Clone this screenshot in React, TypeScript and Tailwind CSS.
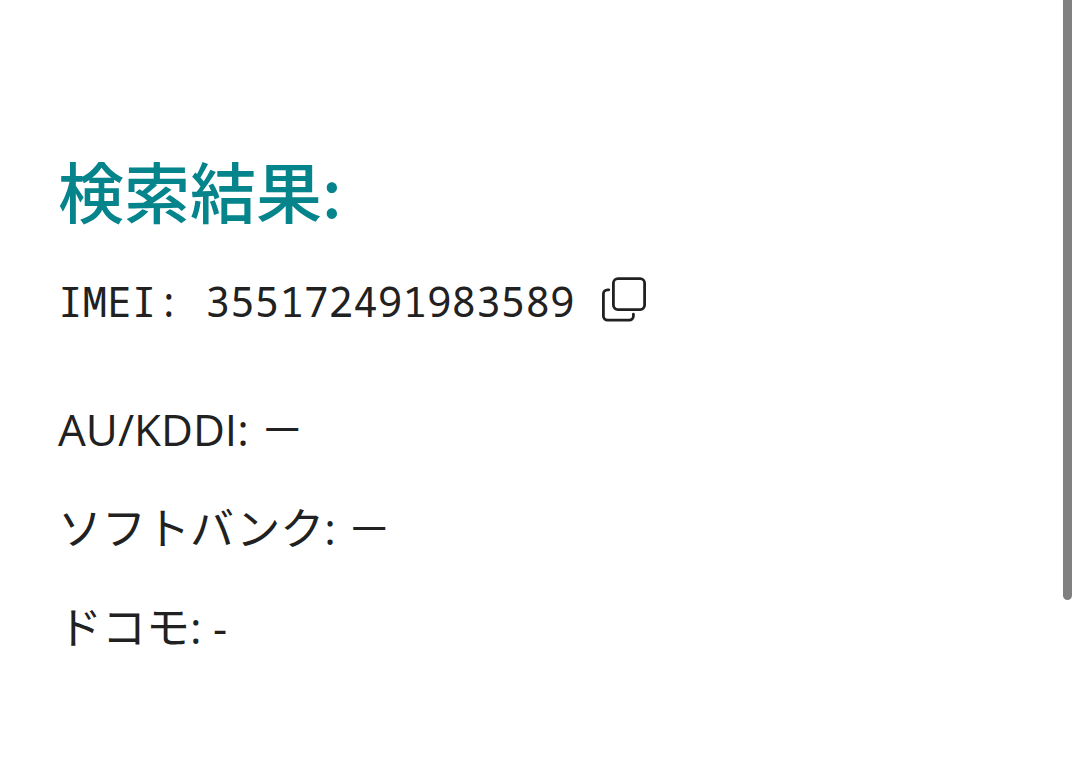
const carriers = [
  { name: 'AU/KDDI', status: '－' },
  { name: 'ソフトバンク', status: '－' },
  { name: 'ドコモ', status: '-' },
]

export default function App() {
  const imei = '355172491983589'

  return (
    <div className="flex min-h-screen bg-white font-['Open_Sans','Noto_Sans_CJK_JP',sans-serif] text-[#212121]">
      <main className="flex-1 px-[58px] pt-[141px]">
        <h2 className="font-['Noto_Sans_CJK_JP',sans-serif] text-[66px] leading-[96px] font-medium text-[#06848c]">検索結果:</h2>
        <div className="mt-8 flex items-start gap-6">
          <p className="font-['Noto_Sans_Mono','DejaVu_Sans_Mono','Noto_Sans_CJK_JP',monospace] text-[41px] leading-[64px]">IMEI: {imei}</p>
          <button type="button" className="mt-2" aria-label="コピー" onClick={() => navigator.clipboard?.writeText(imei)}>
            <svg className="h-12 w-12" viewBox="0 0 48 48" fill="none" stroke="currentColor" strokeWidth="2.8">
              <rect x="14.4" y="1.6" width="31.2" height="31" rx="4.5" />
              <path d="M9.8 12.8H8.6a4.2 4.2 0 0 0-4.2 4.2v22a4.2 4.2 0 0 0 4.2 4.2h21.6a4.2 4.2 0 0 0 4.2-4.2V37.2" strokeLinecap="round" />
            </svg>
          </button>
        </div>
        <div className="mt-16 flex flex-col gap-[35px] text-[44px] leading-[64px]">
          {carriers.map((c) => (
            <p key={c.name}>
              {c.name}: {c.status}
            </p>
          ))}
        </div>
      </main>
      <div className="mr-2 h-[600px] w-[9px] rounded-b-full bg-[#808080]" />
    </div>
  )
}
